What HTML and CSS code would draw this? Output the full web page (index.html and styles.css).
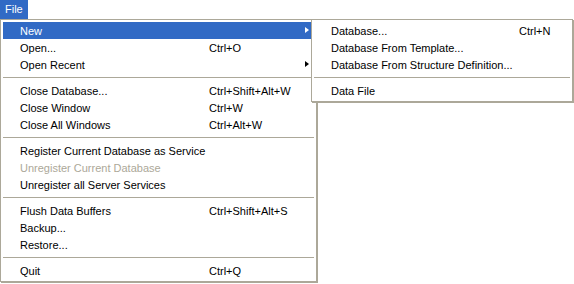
FILE: index.html
```html
<!DOCTYPE html>
<html>
<head>
<meta charset="utf-8">
<link rel="stylesheet" href="styles.css">
</head>
<body>
<div class="menubar"><span class="top-item">File</span></div>

<div class="menu main">
  <div class="row active"><span class="label">New</span><span class="key"></span><span class="arrow"></span></div>
  <div class="row"><span class="label">Open...</span><span class="key">Ctrl+O</span></div>
  <div class="row"><span class="label">Open Recent</span><span class="key"></span><span class="arrow"></span></div>
  <div class="sep"></div>
  <div class="row"><span class="label">Close Database...</span><span class="key">Ctrl+Shift+Alt+W</span></div>
  <div class="row"><span class="label">Close Window</span><span class="key">Ctrl+W</span></div>
  <div class="row"><span class="label">Close All Windows</span><span class="key">Ctrl+Alt+W</span></div>
  <div class="sep"></div>
  <div class="row"><span class="label">Register Current Database as Service</span></div>
  <div class="row disabled"><span class="label">Unregister Current Database</span></div>
  <div class="row"><span class="label">Unregister all Server Services</span></div>
  <div class="sep"></div>
  <div class="row"><span class="label">Flush Data Buffers</span><span class="key">Ctrl+Shift+Alt+S</span></div>
  <div class="row"><span class="label">Backup...</span></div>
  <div class="row"><span class="label">Restore...</span></div>
  <div class="sep"></div>
  <div class="row"><span class="label">Quit</span><span class="key">Ctrl+Q</span></div>
</div>

<div class="menu sub">
  <div class="row"><span class="label">Database...</span><span class="key">Ctrl+N</span></div>
  <div class="row"><span class="label">Database From Template...</span></div>
  <div class="row"><span class="label">Database From Structure Definition...</span></div>
  <div class="sep"></div>
  <div class="row"><span class="label">Data File</span></div>
</div>
</body>
</html>
```

FILE: styles.css
```css
html, body {
  margin: 0;
  padding: 0;
  background: #ffffff;
}
body {
  width: 574px;
  height: 284px;
  position: relative;
  overflow: hidden;
  font-family: "Liberation Sans", Arial, sans-serif;
  font-size: 11px;
  color: #000000;
}
.menubar {
  height: 19px;
  display: flex;
}
.top-item {
  background: #316ac5;
  color: #ffffff;
  width: 28px;
  box-sizing: border-box;
  padding-left: 5px;
  line-height: 19px;
}
.menu {
  position: absolute;
  top: 19px;
  background: #ffffff;
  border: 1px solid #aca899;
  padding: 2px;
  box-shadow: 1px 1px 0 #aca899;
  box-sizing: border-box;
}
.main {
  left: 0;
  width: 317px;
}
.sub {
  left: 311px;
  width: 262px;
}
.row {
  height: 17px;
  display: flex;
  align-items: center;
  padding-left: 17px;
  position: relative;
  white-space: nowrap;
}
.row.active {
  background: #316ac5;
  color: #ffffff;
}
.row.disabled {
  color: #aca899;
}
.label {
  width: 189px;
  flex: none;
}
.sub .label {
  width: 188px;
}
.arrow {
  position: absolute;
  right: 5px;
  top: 5px;
  width: 0;
  height: 0;
  border-top: 3.5px solid transparent;
  border-bottom: 3.5px solid transparent;
  border-left: 4px solid #000000;
}
.row.active .arrow {
  border-left-color: #ffffff;
}
.sep {
  height: 1px;
  background: #aca899;
  margin: 4px 0;
}
```
